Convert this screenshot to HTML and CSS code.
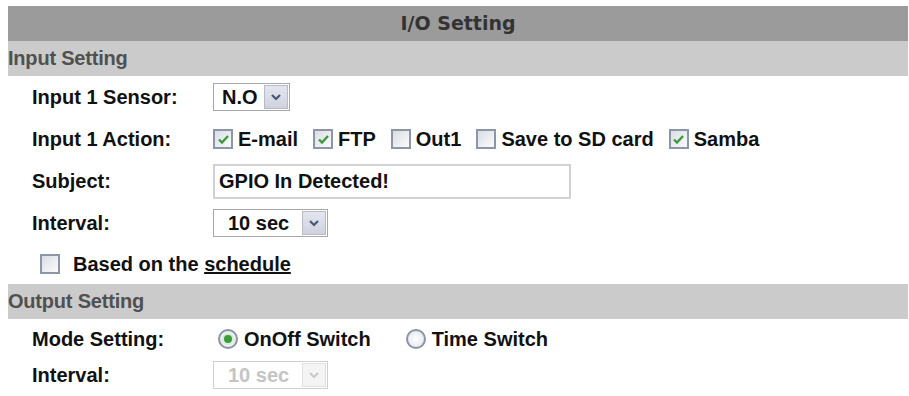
FILE: index.html
```html
<!doctype html>
<html>
<head>
    <meta charset="UTF-8">
    <title>I/O Setting</title>
    <link rel="stylesheet" href="styles.css">
</head>
<body>
<div class="panel">
    <div class="title">I/O Setting</div>

    <div class="section">Input Setting</div>
    <div class="row">
        <span class="label">Input 1 Sensor:</span>
        <div class="select sel-no">
            <span class="sel-text">N.O</span>
            <span class="sel-btn"><svg width="12" height="8" viewBox="0 0 12 8"><polyline points="2,2 6,6 10,2" fill="none" stroke="#4a5877" stroke-width="2.2"/></svg></span>
        </div>
    </div>
    <div class="row">
        <span class="label">Input 1 Action:</span>
        <div class="checks">
            <span class="check-item"><span class="cb on"><svg width="13" height="11" viewBox="0 0 13 11"><polyline points="2,5.5 5,8.5 11,2" fill="none" stroke="#3c9c3a" stroke-width="2.4"/></svg></span>E-mail</span>
            <span class="check-item"><span class="cb on"><svg width="13" height="11" viewBox="0 0 13 11"><polyline points="2,5.5 5,8.5 11,2" fill="none" stroke="#3c9c3a" stroke-width="2.4"/></svg></span>FTP</span>
            <span class="check-item"><span class="cb"></span>Out1</span>
            <span class="check-item"><span class="cb"></span>Save to SD card</span>
            <span class="check-item"><span class="cb on"><svg width="13" height="11" viewBox="0 0 13 11"><polyline points="2,5.5 5,8.5 11,2" fill="none" stroke="#3c9c3a" stroke-width="2.4"/></svg></span>Samba</span>
        </div>
    </div>
    <div class="row">
        <span class="label">Subject:</span>
        <div class="text-box">GPIO In Detected!</div>
    </div>
    <div class="row">
        <span class="label">Interval:</span>
        <div class="select sel-interval">
            <span class="sel-text">10 sec</span>
            <span class="sel-btn"><svg width="12" height="8" viewBox="0 0 12 8"><polyline points="2,2 6,6 10,2" fill="none" stroke="#4a5877" stroke-width="2.2"/></svg></span>
        </div>
    </div>
    <div class="row row-schedule">
        <span class="cb"></span>
        <span class="schedule-text">Based on the <u>schedule</u></span>
    </div>

    <div class="section">Output Setting</div>
    <div class="row row-mode">
        <span class="label">Mode Setting:</span>
        <span class="radio-item"><span class="radio on"><span class="dot"></span></span>OnOff Switch</span>
        <span class="radio-item"><span class="radio"></span>Time Switch</span>
    </div>
    <div class="row row-last">
        <span class="label">Interval:</span>
        <div class="select sel-interval disabled">
            <span class="sel-text">10 sec</span>
            <span class="sel-btn"><svg width="12" height="8" viewBox="0 0 12 8"><polyline points="2,2 6,6 10,2" fill="none" stroke="#c8c8c8" stroke-width="2"/></svg></span>
        </div>
    </div>
</div>
</body>
</html>
```

FILE: styles.css
```css
* {
    margin: 0;
    padding: 0;
}

body {
    background-color: #fff;
    font-family: "Liberation Sans", Arial, sans-serif;
    font-weight: bold;
    font-size: 20px;
    color: #111;
}

.panel {
    margin: 6px 1px 0 8px;
}

.title {
    height: 35px;
    line-height: 35px;
    background-color: #9b9b9b;
    text-align: center;
    font-family: "DejaVu Sans", Verdana, sans-serif;
    font-size: 19px;
    color: #333;
}

.section {
    height: 35px;
    line-height: 35px;
    background-color: #cbcbcb;
    color: #505050;
    letter-spacing: -0.2px;
}

.row {
    display: flex;
    align-items: center;
    height: 42px;
    padding-left: 24px;
}

.row-schedule {
    height: 40px;
    padding-left: 32px;
}

.row-mode {
    height: 40px;
}

.row-last {
    height: 32px;
}

.label {
    width: 181px;
    flex-shrink: 0;
}

.select {
    display: flex;
    align-items: center;
    height: 28px;
    box-sizing: border-box;
    border: 1px solid #a8a8a8;
    background-color: #fff;
}

.sel-no {
    width: 77px;
    padding-left: 8px;
}

.sel-interval {
    width: 115px;
    padding-left: 14px;
}

.sel-text {
    flex: 1;
}

.sel-btn {
    display: flex;
    align-items: center;
    justify-content: center;
    width: 24px;
    height: 24px;
    margin-right: 1px;
    box-sizing: border-box;
    border: 1px solid #b7bac8;
    background: linear-gradient(#e4e6ee, #cfd2de);
}

.select.disabled {
    border-color: #cfcfcf;
    color: #c4c4c4;
}

.select.disabled .sel-btn {
    border-color: #e0e0e0;
    background: #f4f4f4;
}

.checks {
    display: flex;
    align-items: center;
    gap: 15px;
}

.check-item {
    display: flex;
    align-items: center;
}

.cb {
    display: flex;
    align-items: center;
    justify-content: center;
    width: 20px;
    height: 20px;
    box-sizing: border-box;
    border: 2px solid #8c96a6;
    background: linear-gradient(135deg, #d9dde4, #fbfbfc);
    margin-right: 5px;
    flex-shrink: 0;
}

.text-box {
    width: 358px;
    height: 35px;
    line-height: 31px;
    box-sizing: border-box;
    border: 2px solid #d2d2d2;
    padding-left: 4px;
}

.schedule-text {
    margin-left: 8px;
}

.radio-item {
    display: flex;
    align-items: center;
    margin-right: 30px;
}

.radio {
    display: flex;
    align-items: center;
    justify-content: center;
    width: 20px;
    height: 20px;
    box-sizing: border-box;
    border: 2px solid #8c94a2;
    border-radius: 50%;
    background: radial-gradient(#ffffff, #dfe3ea);
    margin-left: 5px;
    margin-right: 6px;
}

.radio .dot {
    width: 8px;
    height: 8px;
    border-radius: 50%;
    background-color: #3c9c3a;
    box-shadow: 0 0 0 2px #d6efd5;
}
```
